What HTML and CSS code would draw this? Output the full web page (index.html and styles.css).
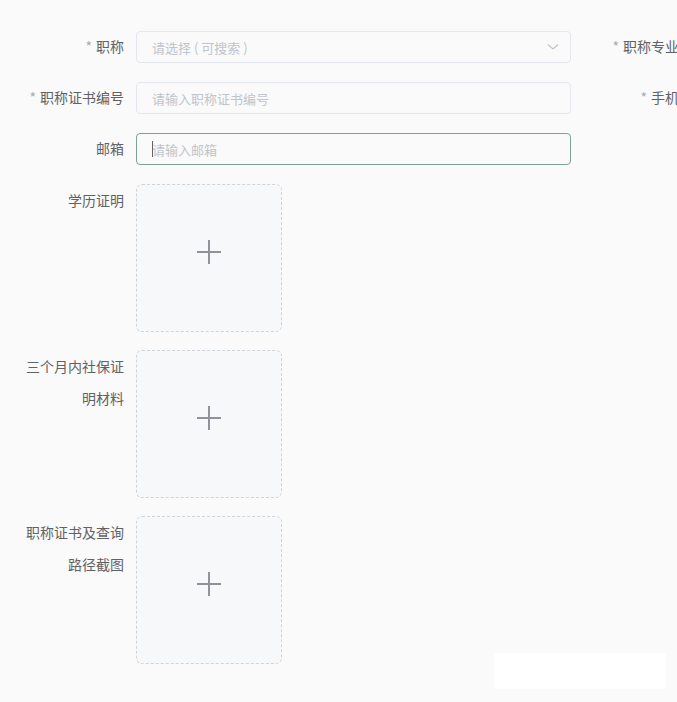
FILE: index.html
```html
<!DOCTYPE html>
<html lang="zh-CN">
<head>
    <meta charset="UTF-8">
    <meta name="viewport" content="width=device-width, initial-scale=1.0">
    <title>职称信息</title>
    <link rel="stylesheet" href="styles.css">
</head>
<body>
    <form class="form">
        <div class="row">
            <div class="item">
                <label class="label"><span class="star">*</span>职称</label>
                <div class="control">
                    <div class="select">
                        <input class="input" type="text" placeholder="请选择 ( 可搜索 )">
                        <svg class="arrow" width="12" height="8" viewBox="0 0 12 8">
                            <path d="M1 1.5 L6 6 L11 1.5" fill="none" stroke="#c0c4cc" stroke-width="1.2"/>
                        </svg>
                    </div>
                </div>
            </div>
            <div class="item">
                <label class="label"><span class="star">*</span>职称专业</label>
            </div>
        </div>

        <div class="row">
            <div class="item">
                <label class="label"><span class="star">*</span>职称证书编号</label>
                <div class="control">
                    <input class="input" type="text" placeholder="请输入职称证书编号">
                </div>
            </div>
            <div class="item">
                <label class="label"><span class="star">*</span>手机</label>
            </div>
        </div>

        <div class="row">
            <div class="item">
                <label class="label">邮箱</label>
                <div class="control">
                    <input class="input focused" type="text" placeholder="请输入邮箱">
                    <span class="caret"></span>
                </div>
            </div>
        </div>

        <div class="upload-item">
            <label class="label">学历证明</label>
            <div class="upload"><span class="plus"></span></div>
        </div>

        <div class="upload-item">
            <label class="label">三个月内社保证明材料</label>
            <div class="upload"><span class="plus"></span></div>
        </div>

        <div class="upload-item">
            <label class="label">职称证书及查询路径截图</label>
            <div class="upload"><span class="plus"></span></div>
        </div>
    </form>

    <div class="footer-box"></div>
</body>
</html>
```

FILE: styles.css
```css
html, body {
    margin: 0;
    padding: 0;
    background-color: #fafafa;
    overflow: hidden;
}

body {
    font-family: "Noto Sans CJK SC", "Noto Sans", sans-serif;
    font-size: 14px;
    color: #606266;
    height: 702px;
    position: relative;
}

.form {
    padding: 31px 0 0 16px;
}

.row {
    display: grid;
    grid-template-columns: 555px 200px;
    margin-bottom: 19px;
}

.item {
    display: flex;
    align-items: flex-start;
}

.label {
    width: 120px;
    flex-shrink: 0;
    box-sizing: border-box;
    padding-right: 12px;
    text-align: right;
    line-height: 31px;
    color: #606266;
    white-space: nowrap;
}

.star {
    color: #a8abb2;
    margin-right: 4px;
}

.control {
    width: 435px;
    position: relative;
}

.select {
    position: relative;
}

.input {
    display: block;
    width: 100%;
    height: 32px;
    box-sizing: border-box;
    padding: 0 15px;
    border: 1px solid #e4e7ed;
    border-radius: 4px;
    background-color: #fafafa;
    font-family: inherit;
    font-size: 13px;
    color: #606266;
    outline: none;
}

.input::placeholder {
    color: #c0c4cc;
}

.input.focused {
    border-color: #7fa393;
}

.caret {
    position: absolute;
    left: 16px;
    top: 8px;
    width: 1px;
    height: 16px;
    background-color: #606266;
}

.arrow {
    position: absolute;
    right: 12px;
    top: 12px;
}

.upload-item {
    display: flex;
    align-items: flex-start;
    margin-bottom: 18px;
}

.upload-item .label {
    white-space: normal;
    word-break: break-all;
    line-height: 32px;
}

.upload {
    width: 146px;
    height: 148px;
    box-sizing: border-box;
    border: 1px dashed #cfd3da;
    border-radius: 6px;
    background-color: #f7f8fa;
    display: flex;
    align-items: center;
    justify-content: center;
}

.plus {
    position: relative;
    width: 24px;
    height: 24px;
    margin-top: -12px;
}

.plus::before,
.plus::after {
    content: "";
    position: absolute;
    background-color: #909399;
}

.plus::before {
    left: 0;
    top: 11px;
    width: 24px;
    height: 2px;
}

.plus::after {
    left: 11px;
    top: 0;
    width: 2px;
    height: 24px;
}

.footer-box {
    position: absolute;
    left: 494px;
    top: 653px;
    width: 172px;
    height: 36px;
    background-color: #ffffff;
    border-radius: 2px;
}
```
